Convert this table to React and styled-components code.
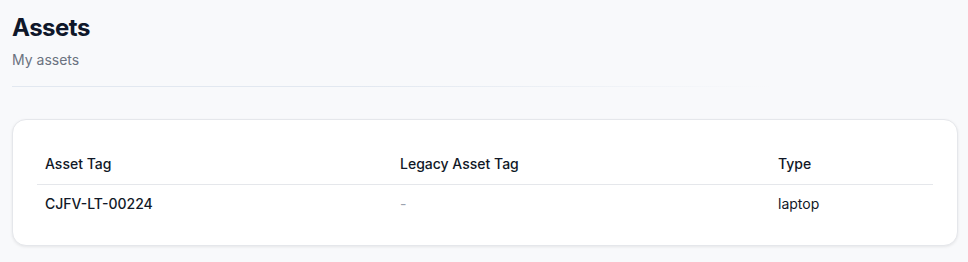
import React from 'react';
import styled, { createGlobalStyle } from 'styled-components';

const GlobalStyle = createGlobalStyle`
  body {
    margin: 0;
    background: #f8f9fb;
    font-family: Inter, "Noto Sans", sans-serif;
    color: #0f172a;
  }
`;

const assets = [
  { tag: 'CJFV-LT-00224', legacy: null, type: 'laptop' },
];

function App() {
  return (
    <>
      <GlobalStyle />
      <Page>
        <Header>
          <Title>Assets</Title>
          <Subtitle>My assets</Subtitle>
        </Header>
        <Divider />
        <Card>
          <Table>
            <colgroup>
              <col style={{ width: 355 }} />
              <col style={{ width: 378 }} />
              <col />
            </colgroup>
            <thead>
              <tr>
                <Th>Asset Tag</Th>
                <Th>Legacy Asset Tag</Th>
                <Th>Type</Th>
              </tr>
            </thead>
            <tbody>
              {assets.map((a) => (
                <tr key={a.tag}>
                  <Td strong>{a.tag}</Td>
                  <Td muted={!a.legacy}>{a.legacy || '-'}</Td>
                  <Td>{a.type}</Td>
                </tr>
              ))}
            </tbody>
          </Table>
        </Card>
      </Page>
    </>
  );
}

export default App;

const Page = styled.div`
  padding: 14px 10px 16px 12px;
`;

const Header = styled.div`
  display: flex;
  flex-direction: column;
`;

const Title = styled.h1`
  margin: 0;
  font-size: 24px;
  line-height: 28px;
  font-weight: 700;
  color: #0f172a;
  letter-spacing: -0.5px;
`;

const Subtitle = styled.p`
  margin: 9px 0 0;
  font-size: 14px;
  line-height: 17px;
  color: #6b7280;
`;

const Divider = styled.div`
  margin-top: 18px;
  width: 760px;
  height: 1px;
  background: linear-gradient(90deg, #e2e8f0 0%, #e2e8f0 45%, rgba(226, 232, 240, 0) 100%);
`;

const Card = styled.div`
  margin-top: 32px;
  background: #fff;
  border: 1px solid #e5e7eb;
  border-radius: 14px;
  box-shadow: 0 1px 3px rgba(0, 0, 0, 0.08);
  padding: 23px 24px;
`;

const Table = styled.table`
  width: 100%;
  table-layout: fixed;
  border-collapse: collapse;
  font-size: 14px;
  line-height: 17px;
`;

const Th = styled.th`
  text-align: left;
  font-weight: 500;
  color: #111827;
  padding: 12px 8px;
  border-bottom: 1px solid #e5e7eb;
`;

const Td = styled.td`
  padding: 10px 8px;
  font-weight: ${(p) => (p.strong ? 500 : 400)};
  color: ${(p) => (p.muted ? '#9ca3af' : '#111827')};
`;
